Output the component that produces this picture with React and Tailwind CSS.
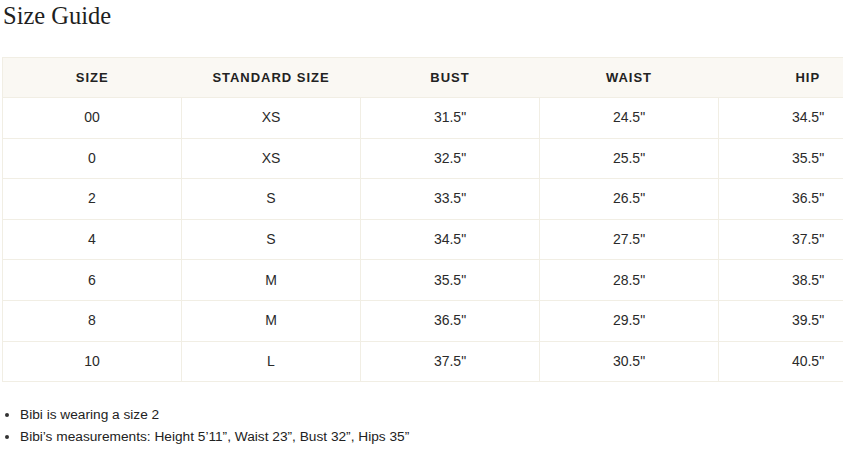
const ROWS = [
  ['00', 'XS', '31.5"', '24.5"', '34.5"'],
  ['0', 'XS', '32.5"', '25.5"', '35.5"'],
  ['2', 'S', '33.5"', '26.5"', '36.5"'],
  ['4', 'S', '34.5"', '27.5"', '37.5"'],
  ['6', 'M', '35.5"', '28.5"', '38.5"'],
  ['8', 'M', '36.5"', '29.5"', '39.5"'],
  ['10', 'L', '37.5"', '30.5"', '40.5"'],
]

const HEADERS = ['Size', 'Standard Size', 'Bust', 'Waist', 'Hip']

export default function App() {
  return (
    <div className="min-h-screen overflow-hidden bg-white pl-[2px] text-[#222] [font-family:'Liberation_Sans',Arial,sans-serif]">
      <h1 className="pl-px pt-[2px] text-[24.5px] leading-[28px] text-[#1f1f1f] [font-family:'Liberation_Serif','Times_New_Roman',serif]">
        Size Guide
      </h1>

      <table className="mt-[27px] table-fixed border-collapse border border-[#f1eee4]">
        <thead>
          <tr className="h-[40px] bg-[#faf8f3]">
            {HEADERS.map((h) => (
              <th
                key={h}
                className="w-[179px] min-w-[179px] text-center text-[13px] font-bold uppercase tracking-[0.075em] text-[#222]"
              >
                {h}
              </th>
            ))}
          </tr>
        </thead>
        <tbody>
          {ROWS.map((row) => (
            <tr key={row[0]} className="h-[40.6px]">
              {row.map((cell, i) => (
                <td
                  key={i}
                  className="border border-[#f1eee4] text-center text-[14px] text-[#2a2a2a]"
                >
                  {cell}
                </td>
              ))}
            </tr>
          ))}
        </tbody>
      </table>

      <ul className="mt-[22px] list-disc pl-[18px] text-[13.7px] leading-[22px] text-[#222] marker:text-[#333]">
        <li>Bibi is wearing a size 2</li>
        <li>Bibi’s measurements: Height 5’11”, Waist 23”, Bust 32”, Hips 35”</li>
      </ul>
    </div>
  )
}
